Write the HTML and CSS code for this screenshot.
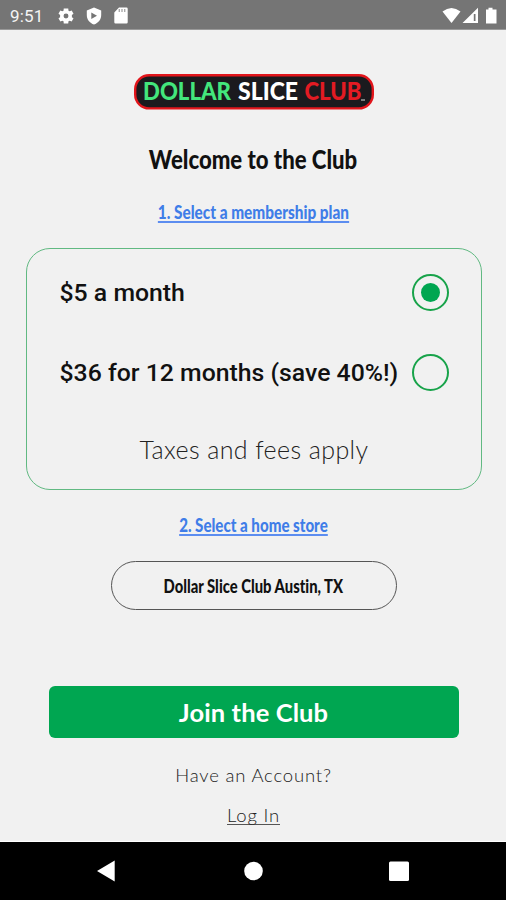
FILE: index.html
```html
<!DOCTYPE html>
<html lang="en">
<head>
<meta charset="utf-8">
<title>Dollar Slice Club</title>
<link rel="stylesheet" href="styles.css">
</head>
<body>
<header class="status">
  <span class="time">9:51</span>
  <svg class="gear" width="18" height="18" viewBox="0 0 24 24"><path fill="#fff" fill-rule="evenodd" d="M19.800 13.500a8 8 0 0 0 0-3l2.200-1.500-2.400-4.200-2.700 1a8 8 0 0 0-1.600-.9L15 2H9l-.3 2.900a8 8 0 0 0-1.600.9l-2.700-1L2 9l2.200 1.500a8 8 0 0 0 0 3L2 15l2.400 4.200 2.700-1a8 8 0 0 0 1.600.9L9 22h6l.3-2.900a8 8 0 0 0 1.600-.9l2.700 1L22 15zM12 15.300a3.300 3.300 0 1 1 0-6.600 3.300 3.300 0 0 1 0 6.600z"/></svg>
  <svg class="shield" width="16" height="18" viewBox="0 0 16 18"><path fill="#fff" fill-rule="evenodd" d="M8 .5 15.200 3.500V8c0 4.500-3 8.200-7.200 9.500C3.800 16.200.8 12.500.8 8V3.500zM5.300 5.500v6.500l5.700-3.200z"/></svg>
  <svg class="card" width="14" height="17" viewBox="0 0 14 17"><path fill="#fff" d="M5 .5h7.500A1.200 1.200 0 0 1 13.700 1.700v13.600a1.200 1.200 0 0 1-1.200 1.200h-11A1.200 1.200 0 0 1 .3 15.300V5.500z"/><path stroke="#aaa" stroke-width="1.400" d="M5.300 2v3M8 2v3M10.700 2v3"/></svg>
  <svg class="signals" width="56" height="18" viewBox="0 0 56 18"><path fill="#fff" d="M.5 4.500Q9.500-2.500 18.500 4.500L9.500 16z"/><path fill="#fff" fill-rule="evenodd" d="M36 .8V16H20.500zM31.800 7v7h1.700V7z"/><path fill="#fff" d="M44 2.500h2.500V.8h4v1.700H54.500V16.500H44z"/></svg>
</header>
<main>
  <svg class="logo" width="240" height="36" viewBox="0 0 240 36">
    <rect x="1.200" y="1.200" width="237.600" height="33.200" rx="14" fill="#1b1a1e" stroke="#e2151b" stroke-width="2.400"/>
    <g class="logo-text"><text x="9" y="26" fill="#43e67c" textLength="88" lengthAdjust="spacingAndGlyphs">DOLLAR</text><text x="104" y="26" fill="#fff" textLength="60" lengthAdjust="spacingAndGlyphs">SLICE</text><text x="170.500" y="26" fill="#e31b23" textLength="57" lengthAdjust="spacingAndGlyphs">CLUB</text></g>
    <path d="M227 26h4" stroke="#ddd"/>
  </svg>
  <h1><span>Welcome to the Club</span></h1>
  <a class="step plan-link"><span>1. Select a membership plan</span></a>
  <section class="plans">
    <div class="plan"><span class="label">$5 a month</span><i class="radio on"></i></div>
    <div class="plan"><span class="label">$36 for 12 months (save 40%!)</span><i class="radio"></i></div>
    <p class="tax"><span>Taxes and fees apply</span></p>
  </section>
  <a class="step store-link"><span>2. Select a home store</span></a>
  <div class="store"><span>Dollar Slice Club Austin, TX</span></div>
  <button class="join"><span>Join the Club</span></button>
  <p class="have"><span>Have an Account?</span></p>
  <a class="login"><span>Log In</span></a>
</main>
<nav>
  <svg width="506" height="58" viewBox="0 0 506 58"><path fill="#fff" d="M97 29 114.700 18.500v21z"/><circle cx="253.500" cy="29" r="9.300" fill="#fff"/><rect x="389" y="19.500" width="20" height="19.500" rx="1.500" fill="#fff"/></svg>
</nav>
</body>
</html>
```
FILE: styles.css
```css
* { box-sizing: border-box; }
body { margin: 0; width: 506px; height: 900px; overflow: hidden; background: #f1f1f1; font-family: Lato, sans-serif; color: #111; display: flex; flex-direction: column; font-variant-ligatures: none; }
.status { height: 30px; background: #757575; border-bottom: 1px solid #999; display: flex; align-items: center; padding: 2px 8px 0 10px; flex: none; }
.time { width: 47px; font: 400 17px/20px Roboto, sans-serif; color: #f4f4f4; letter-spacing: .2px; }
.shield { margin-left: 11px; }
.card { margin-left: 12px; }
.signals { margin-left: auto; }
main { height: 812px; flex: none; display: flex; flex-direction: column; align-items: center; border-bottom: 1px solid #fff; padding-left: 1px; }
h1, p { margin: 0; font-weight: 400; }
span { white-space: nowrap; }
.logo { margin-top: 44px; flex: none; }
.logo-text { font: 900 24px Lato, sans-serif; }
h1 { height: 34px; margin-top: 32px; font-size: 27px; line-height: 34px; }
h1 span { font-weight: 900; transform: scaleX(.82); }
.step span, h1 span, .store span, .join span, .tax span, .have span, .login span { display: inline-block; }
.step { height: 24px; font-size: 19px; line-height: 24px; font-weight: 900; color: #3f7de8; }
.step span { border-bottom: 2px solid #5c8df0; height: 23px; }
.plan-link { margin-top: 24px; }
.plan-link span { transform: scaleX(.807); }
.plans { width: 456px; height: 242px; margin-top: 24px; border: 1.500px solid #61b982; border-radius: 24px; padding: 3px 32px 0 33px; flex: none; display: flex; flex-direction: column; }
.plan { height: 80px; display: flex; align-items: center; justify-content: space-between; font: 500 24.800px/30px Roboto, sans-serif; }
.label { padding-top: 2px; }
.radio { width: 37px; height: 37px; border: 2px solid #18a34a; border-radius: 50%; display: flex; align-items: center; justify-content: center; flex: none; }
.on::after { content: ""; width: 19px; height: 19px; border-radius: 50%; background: #00a651; }
.tax { text-align: center; font-size: 25px; line-height: 30px; margin-top: 22px; font-weight: 300; color: #222; letter-spacing: .4px; }
.store-link { margin-top: 23px; }
.store-link span { transform: scaleX(.795); }
.store { width: 286px; height: 49px; margin-top: 24px; border: 1px solid #555; border-radius: 25px; display: flex; align-items: center; justify-content: center; font-size: 18.500px; font-weight: 900; flex: none; }
.store span { transform: scaleX(.8); }
.join { width: 410px; height: 52px; margin-top: 76px; padding: 0; border: 0; border-radius: 6px; background: #00a651; color: #fff; font: 700 25.500px/52px Lato, sans-serif; letter-spacing: .1px; flex: none; }
.have { margin-top: 25px; font-size: 18.500px; line-height: 24px; font-weight: 300; color: #222; letter-spacing: .8px; }
.login { margin-top: 16px; font-size: 18.500px; line-height: 24px; font-weight: 300; color: #222; letter-spacing: .8px; }
.login span { height: 22px; border-bottom: 1px solid #555; }
nav { height: 58px; background: #000; flex: none; }
nav svg { display: block; }
```
